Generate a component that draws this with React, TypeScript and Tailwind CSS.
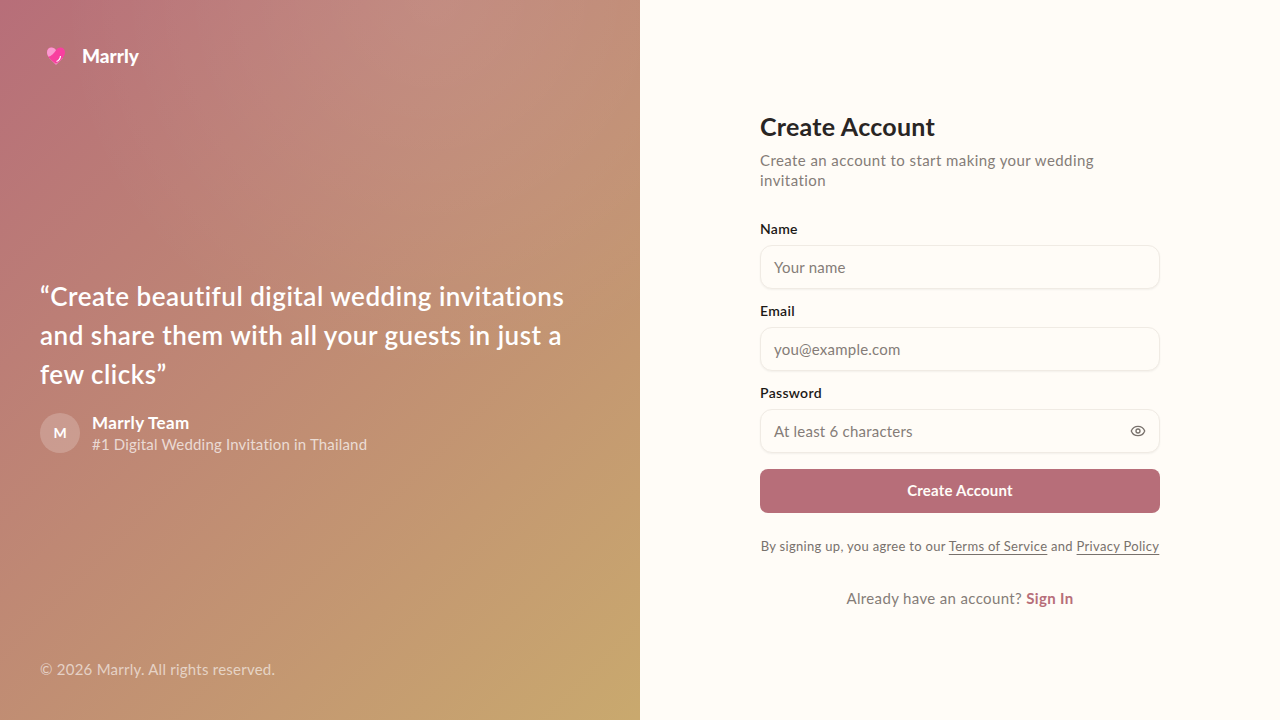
import { Eye } from "lucide-react";

const FONT = "font-['Lato','Noto_Sans',sans-serif]";

const Field = ({ label, placeholder, icon }: { label: string; placeholder: string; icon?: boolean }) => (
	<div className="flex flex-col gap-1.5">
		<label className="text-sm leading-5 font-semibold tracking-[0.3px] text-[#1c1917]">{label}</label>
		<div className="flex h-11 items-center justify-between rounded-xl border border-[#f0ebe4] bg-[#fffcf7] px-[13px] shadow-xs">
			<span className="text-[15px] tracking-[0.22px] text-[#857c77]">{placeholder}</span>
			{icon && <Eye className="h-4 w-4 text-[#78716c]" />}
		</div>
	</div>
);

export default function App() {
	return (
		<div className={`flex h-[720px] w-[1280px] overflow-hidden ${FONT}`}>
			<div className="flex w-[640px] flex-col justify-between bg-[radial-gradient(circle_at_68%_0%,rgba(255,255,255,0.09),transparent_45%),linear-gradient(135deg,#b76e79_0%,#c9a96e_100%)] p-10">
				<div className="flex h-8 items-center gap-4">
					<svg viewBox="0 0 20 20" className="ml-[6px] h-5 w-5" aria-hidden="true">
						<path d="M10 19 3 12h14z" fill="#f08ac0" />
						<path d="M10 17.500C5.500 14.500 1 11 1 6.200 1 3.500 3 1.500 5.500 1.500c1.900 0 3.500 1 4.500 2.700 1-1.700 2.600-2.700 4.500-2.700C17 1.500 19 3.500 19 6.200c0 4.800-4.500 8.300-9 11.300z" fill="#f8409f" />
						<path d="M5.500 1.500C3 1.500 1 3.500 1 6.200c0 1.700.6 3.200 1.500 4.500C5 10 8 7.500 10 4.200 9 2.500 7.400 1.500 5.500 1.500z" fill="#fb9ad0" />
						<path d="M10.500 15.500c2.300-1 3.800-3 4-5.500" stroke="#fff" strokeWidth="1.200" fill="none" />
					</svg>
					<span className="text-[19px] font-black text-white">Marrly</span>
				</div>

				<div className="flex flex-col gap-[18px] pb-0.5">
					<p className="text-[26px] leading-[39px] font-semibold tracking-[0.5px] text-white">
						“Create beautiful digital wedding invitations and share them with all your guests in just a few clicks”
					</p>
					<div className="flex items-center gap-3">
						<div className="flex h-10 w-10 items-center justify-center rounded-full bg-white/20 text-sm font-bold text-white">M</div>
						<div className="flex flex-col">
							<span className="text-[17px] leading-[22px] font-bold tracking-[0.35px] text-white">Marrly Team</span>
							<span className="text-[15px] leading-5 tracking-[0.18px] text-white/70">#1 Digital Wedding Invitation in Thailand</span>
						</div>
					</div>
				</div>

				<p className="-translate-y-px text-[15px] leading-5 tracking-[0.24px] text-white/60">© 2026 Marrly. All rights reserved.</p>
			</div>

			<div className="flex w-[640px] items-center justify-center bg-[#fffcf7]">
				<div className="w-[400px]">
					<h1 className="text-[25px] leading-8 font-bold tracking-[0.25px] text-[#292524]">Create Account</h1>
					<p className="mt-2 text-[15px] leading-5 tracking-[0.42px] text-[#857c77]">
						Create an account to start making your wedding invitation
					</p>
					<div className="mt-[29px] flex flex-col gap-3">
						<Field label="Name" placeholder="Your name" />
						<Field label="Email" placeholder="you@example.com" />
						<Field label="Password" placeholder="At least 6 characters" icon />
					</div>
					<button type="button" className="mt-4 h-11 w-full rounded-lg bg-[#b76e79] pb-0.5 text-[15px] font-bold tracking-[0.2px] text-[#fffcf7]">
						Create Account
					</button>
					<p className="mt-[23px] text-center text-[13px] leading-5 tracking-[0.31px] whitespace-nowrap text-[#78716c]">
						By signing up, you agree to our <a className="underline underline-offset-[3px]">Terms of Service</a> and{" "}
						<a className="underline underline-offset-[3px]">Privacy Policy</a>
					</p>
					<p className="mt-[30px] text-center text-[15px] leading-6 tracking-[0.35px] text-[#857c77]">
						Already have an account? <a className="font-bold text-[#b76e79]">Sign In</a>
					</p>
				</div>
			</div>
		</div>
	);
}
